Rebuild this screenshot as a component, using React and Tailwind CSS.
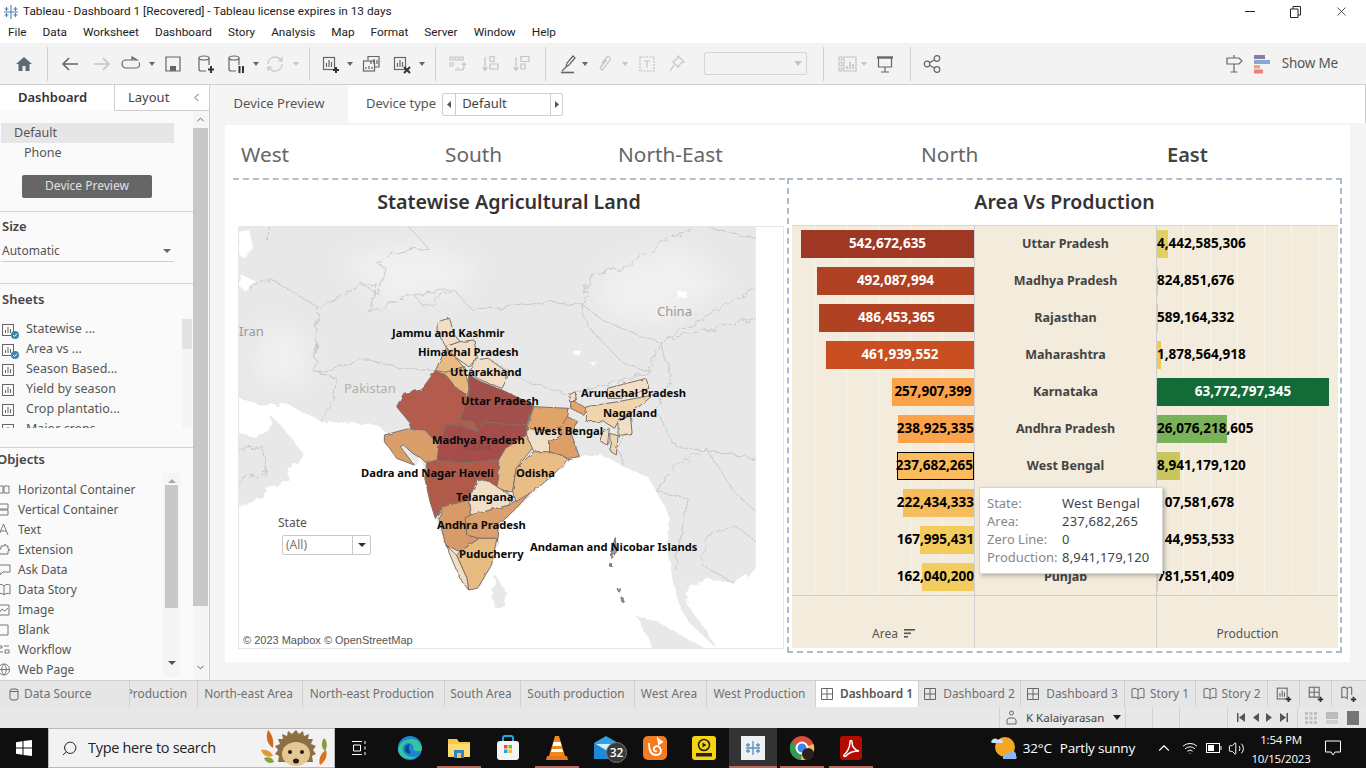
import React from "react";
import { ChevronLeft, ChevronUp, ChevronDown, X, Search, Wifi, Volume2 } from "lucide-react";

const menus = ["File", "Data", "Worksheet", "Dashboard", "Story", "Analysis", "Map", "Format", "Server", "Window", "Help"];

const sheets = ["Statewise ...", "Area vs ...", "Season Based...", "Yield by season", "Crop plantatio...", "Major crops"];
const objects = ["Horizontal Container", "Vertical Container", "Text", "Extension", "Ask Data", "Data Story", "Image", "Blank", "Workflow", "Web Page"];

const rows = [
  { area: "542,672,635", aw: 173, ac: "bg-[#9f3725] text-white justify-center", state: "Uttar Pradesh", prod: "4,442,585,306", pw: 11, pc: "bg-[#e2cf62]" },
  { area: "492,087,994", aw: 157, ac: "bg-[#b04122] text-white justify-center", state: "Madhya Pradesh", prod: "824,851,676", pw: 1, pc: "bg-[#f0cd5e]" },
  { area: "486,453,365", aw: 155, ac: "bg-[#b04122] text-white justify-center", state: "Rajasthan", prod: "589,164,332", pw: 1, pc: "bg-[#f0cd5e]" },
  { area: "461,939,552", aw: 148, ac: "bg-[#c94f22] text-white justify-center", state: "Maharashtra", prod: "1,878,564,918", pw: 4, pc: "bg-[#f0c95b]" },
  { area: "257,907,399", aw: 82, ac: "bg-[#fba34a] text-black justify-center", state: "Karnataka", prod: "63,772,797,345", pw: 172, pc: "bg-[#136b37]", big: true },
  { area: "238,925,335", aw: 76, ac: "bg-[#fba34a] text-black justify-end", state: "Andhra Pradesh", prod: "26,076,218,605", pw: 70, pc: "bg-[#7ab25a]" },
  { area: "237,682,265", aw: 77, ac: "bg-[#f9bb5c] text-black justify-end border border-black", state: "West Bengal", prod: "8,941,179,120", pw: 23, pc: "bg-[#c9c65c]" },
  { area: "222,434,333", aw: 71, ac: "bg-[#f7bc5c] text-black justify-end", state: "", prod: "107,581,678", pw: 1, pc: "bg-[#f0cd5e]" },
  { area: "167,995,431", aw: 54, ac: "bg-[#f2cd5e] text-black justify-end", state: "", prod: "144,953,533", pw: 1, pc: "bg-[#f0cd5e]" },
  { area: "162,040,200", aw: 52, ac: "bg-[#f2cd5e] text-black justify-end", state: "Punjab", prod: "781,551,409", pw: 1, pc: "bg-[#f0cd5e]" },
];

const tabs = [
  { label: "North-east Area", w: "w-[105px]" },
  { label: "North-east Production", w: "w-[142px]" },
  { label: "South Area", w: "w-[76px]" },
  { label: "South production", w: "w-[114px]" },
  { label: "West Area", w: "w-[72px]" },
  { label: "West Production", w: "w-[109px]" },
];

const mapLabels = [
  { t: "Jammu and Kashmir", c: "left-[153px] top-[99px]" },
  { t: "Himachal Pradesh", c: "left-[179px] top-[118px]" },
  { t: "Uttarakhand", c: "left-[211px] top-[138px]" },
  { t: "Uttar Pradesh", c: "left-[222px] top-[167px]" },
  { t: "Arunachal Pradesh", c: "left-[342px] top-[159px]" },
  { t: "Nagaland", c: "left-[364px] top-[179px]" },
  { t: "West Bengal", c: "left-[295px] top-[197px]" },
  { t: "Madhya Pradesh", c: "left-[193px] top-[206px]" },
  { t: "Dadra and Nagar Haveli", c: "left-[122px] top-[239px]" },
  { t: "Odisha", c: "left-[277px] top-[239px]" },
  { t: "Telangana", c: "left-[217px] top-[263px]" },
  { t: "Andhra Pradesh", c: "left-[198px] top-[291px]" },
  { t: "Puducherry", c: "left-[220px] top-[320px]" },
  { t: "Andaman and Nicobar Islands", c: "left-[291px] top-[313px]" },
];

function Ic({ className = "", children, size = 20 }) {
  return (
    <svg
      width={size}
      height={size}
      viewBox="0 0 20 20"
      fill="none"
      stroke="currentColor"
      strokeWidth="1.2"
      className={`flex-none ${className}`}
    >
      {children}
    </svg>
  );
}

function Drop({ className = "" }) {
  return <span className={`flex-none w-0 h-0 border-x-[3px] border-x-transparent border-t-[4px] border-t-current ${className}`} />;
}

function Sep({ className = "" }) {
  return <span className={`flex-none w-px h-[34px] bg-[#d2d2d2] ${className}`} />;
}

function BarIcon() {
  return (
    <>
      <rect x="2.5" y="3.5" width="11" height="12" />
      <path d="M5.5 13V9M8 13V6M10.5 13V8" />
    </>
  );
}

function Plus() {
  return <path d="M15 13v6M12 16h6" strokeWidth="2" stroke="#333" />;
}

function Toolbar() {
  return (
    <div className="h-[42px] flex items-center bg-[#f3f3f3] border-b border-[#cfcfcf] text-[#666] flex-none">
      <Ic className="ml-[14px] text-[#5f6a78]">
        <path d="M10 3 2 10h2.500v7h4v-5h3v5h4v-7H18z" fill="currentColor" stroke="none" />
      </Ic>
      <Sep className="ml-[13px]" />
      <Ic className="ml-[12px]"><path d="M18 10H3M9 4l-6 6 6 6" strokeWidth="1.6" /></Ic>
      <Ic className="ml-[12px] text-[#c4c4c4]"><path d="M2 10h15M11 4l6 6-6 6" strokeWidth="1.6" /></Ic>
      <Ic className="ml-[9px]"><path d="M11 6H5a3.500 3.500 0 0 0 0 8h10a3.500 3.500 0 0 0 3-5.500M11 3l5 3-5 0z" /></Ic>
      <Drop className="ml-[8px]" />
      <Ic className="ml-[8px]">
        <path d="M3 3h14v14H3z" />
        <rect x="7" y="12" width="6" height="5" fill="currentColor" stroke="none" />
      </Ic>
      <Ic className="ml-[12px]">
        <ellipse cx="9" cy="4" rx="5" ry="2" />
        <path d="M4 4v11a2 2 0 0 0 2 2h5M14 4v7" />
        <path d="M16 12v7M13 15.500h6" strokeWidth="2" stroke="#333" />
      </Ic>
      <Ic className="ml-[11px]">
        <ellipse cx="8" cy="4" rx="5" ry="2" />
        <path d="M3 4v11a2 2 0 0 0 2 2h5M13 4v7" />
        <path d="M13.500 12v7M17 12v7" strokeWidth="2" stroke="#333" />
      </Ic>
      <Drop className="ml-[7px]" />
      <Ic className="ml-[6px] text-[#c4c4c4]">
        <path d="M3 10a7 7 0 0 1 12-5l2 2M17 10a7 7 0 0 1-12 5l-2-2M17 3v4h-4M3 17v-4h4" />
      </Ic>
      <Drop className="ml-[8px] text-[#c4c4c4]" />
      <Sep className="ml-[10px]" />
      <Ic className="ml-[11px]"><BarIcon /><Plus /></Ic>
      <Drop className="ml-[6px]" />
      <Ic className="ml-[8px]">
        <path d="M7 6V2.500h11V13h-4" />
        <path d="M10 10V7M13 10V5M16 10V6" />
        <rect x="2.500" y="7" width="11" height="10" />
        <path d="M5 15v-2M8 15v-3M11 15v-2" />
      </Ic>
      <Ic className="ml-[11px]">
        <BarIcon />
        <path d="M12 13l6 6M18 13l-6 6" strokeWidth="2" stroke="#333" />
      </Ic>
      <Drop className="ml-[7px]" />
      <Sep className="ml-[10px]" />
      <Ic className="ml-[11px] text-[#c4c4c4]">
        <path d="M3 3h3v3H3zM8 3h3v3H8zM13 3h3v3h-3zM3 9h3v3H3zM8 16h3v-3" />
        <path d="M17 9v4a3 3 0 0 1-3 3h-2M15 11l2-2 2 2" />
      </Ic>
      <Ic className="ml-[13px] text-[#c4c4c4]">
        <path d="M5 3v13M2.500 13 5 16.500 7.500 13M10 2.500h4v5h-4zM10 10h8v5h-8z" />
      </Ic>
      <Ic className="ml-[11px] text-[#c4c4c4]">
        <path d="M5 3v13M2.500 13 5 16.500 7.500 13M10 2.500h8v5h-8zM10 10h4v5h-4z" />
      </Ic>
      <Sep className="ml-[14px]" />
      <Ic className="ml-[12px]">
        <path d="m8 13 1-4 6-7 2 2-6 7zM4 17c2-2 3-3 4-4" />
        <path d="M3 18.500h13" strokeWidth="1.6" />
      </Ic>
      <Drop className="ml-[4px]" />
      <Ic className="ml-[7px] text-[#c4c4c4]">
        <path d="M7 9l5-6a2.200 2.200 0 0 1 3 3l-7 9a1.500 1.500 0 0 1-2.400-2l6-7" />
      </Ic>
      <Drop className="ml-[7px] text-[#c4c4c4]" />
      <Ic className="ml-[9px] text-[#c4c4c4]">
        <rect x="3" y="3" width="14" height="14" strokeDasharray="2 1" />
        <path d="M7 7h6M10 7v6.500" />
      </Ic>
      <Ic className="ml-[10px] text-[#c4c4c4]">
        <path d="m11 2 6 6-3 1-3 4-5-5 4-3zM7 11l-4 6" />
      </Ic>
      <div className="ml-[17px] w-[103px] h-[23px] flex-none flex items-center justify-end pr-[4px] border border-[#d5d5d5] rounded-[2px] text-[#c4c4c4]">
        <Drop className="border-x-[4px] border-t-[5px]" />
      </div>
      <Sep className="ml-[16px]" />
      <Ic className="ml-[14px] text-[#c4c4c4]">
        <path d="M1 3h3v3H1zM1 8.500h3v3H1zM1 14h3v3H1zM6 3h12v14H6z" />
        <path d="M9 15v-3M12 15V8M15 15v-5" strokeWidth="1.6" />
      </Ic>
      <Drop className="ml-[3px] text-[#c4c4c4]" />
      <Ic className="ml-[8px]">
        <path d="M2 3.500h16" strokeWidth="2.4" />
        <path d="M3.500 4v9h13V4M10 13v5M6 18h8" />
      </Ic>
      <Sep className="ml-[15px]" />
      <Ic className="ml-[11px]">
        <circle cx="15" cy="4.500" r="2.800" />
        <circle cx="5" cy="10" r="2.800" />
        <circle cx="15" cy="15.500" r="2.800" />
        <path d="m7.500 8.700 5-2.900M7.500 11.300l5 2.900" />
      </Ic>
      <Ic className="ml-auto">
        <path d="M10 1v3M3 4h12l3 3-3 3H3zM10 10v8M6.500 18h7" />
      </Ic>
      <svg width="16" height="20" viewBox="0 0 16 20" className="ml-[10px] flex-none">
        <rect x="0" y="1" width="11" height="4" fill="#8f7ba8" />
        <rect x="0" y="6" width="16" height="4" fill="#86a9d0" />
        <rect x="0" y="11" width="6" height="3.500" fill="#f2a86f" />
        <rect x="0" y="15.500" width="9" height="4" fill="#ee7f86" />
      </svg>
      <span className="ml-[12px] mr-[28px] text-[13.5px] tracking-[-0.2px] text-[#555]">Show Me</span>
    </div>
  );
}

function Sidebar() {
  return (
    <aside className="w-[210px] flex-none flex flex-col bg-[#fafafa] border-r border-[#cfcfcf] text-[#555] overflow-hidden">
      <div className="h-[26px] flex flex-none bg-white">
        <div className="w-[114px] flex items-center pl-[18px] text-[13px] font-semibold text-[#333]">Dashboard</div>
        <div className="flex-1 flex items-center pl-[13px] pr-[6px] justify-between border-l border-b border-[#cfcfcf] text-[13px] text-[#444]">
          Layout
          <ChevronLeft size={13} strokeWidth={1.5} />
        </div>
      </div>
      <div className="flex-1 flex min-h-0">
        <div className="w-[193px] flex-none flex flex-col">
          <div className="mt-[12px] ml-[1px] mr-[19px] h-[20px] pt-px flex items-center pl-[13px] bg-[#e6e6e6] text-[12.5px]">Default</div>
          <div className="h-[20px] pt-px flex items-center pl-[24px] text-[12.5px]">Phone</div>
          <div className="mt-[12px] ml-[22px] w-[130px] h-[23px] pb-px flex items-center justify-center bg-[#666] rounded-[2px] text-[#e0e0e0] text-[12px]">Device Preview</div>
          <div className="mt-[13px] h-px flex-none bg-[#d2d2d2]" />
          <div className="mt-[6px] h-[18px] pl-[2px] flex items-center text-[13px] font-semibold text-[#444]">Size</div>
          <div className="mt-[5px] ml-[1px] mr-[19px] h-[21px] flex items-center justify-between pl-px pr-[3px] border-b border-[#cfcfcf] text-[12px]">
            Automatic
            <Drop className="border-x-[4px] border-t-[4px] text-[#666]" />
          </div>
          <div className="mt-[21px] h-px flex-none bg-[#d2d2d2]" />
          <div className="mt-[7px] mb-[-1px] h-[18px] pl-[2px] flex items-center text-[13px] font-semibold text-[#444]">Sheets</div>
          <div className="mt-[11px] h-[109px] flex flex-none overflow-hidden">
            <div className="flex-1 pl-[2px]">
              {sheets.map((s, i) => (
                <div key={s} className="h-[20px] pt-px flex items-center text-[12.5px]">
                  <span className="relative w-[14px] h-[14px] flex-none mr-[10px]">
                    <svg width="13" height="13" viewBox="0 0 13 13" fill="none" stroke="#666">
                      <rect x="0.5" y="1.5" width="11" height="11" />
                      <path d="M3.500 10V7M6 10V4M8.500 10V6" />
                    </svg>
                    {i < 2 && (
                      <svg width="8" height="8" viewBox="0 0 8 8" className="absolute right-[-3px] bottom-[-2px]">
                        <circle cx="4" cy="4" r="4" fill="#3b87ad" />
                        <path d="M2 4l1.500 1.500L6 2.800" fill="none" stroke="#fff" />
                      </svg>
                    )}
                  </span>
                  {s}
                </div>
              ))}
            </div>
            <div className="w-[10px] mr-px bg-[#f5f5f5]">
              <div className="h-[30px] bg-[#e2e2e2]" />
            </div>
          </div>
          <div className="mt-[19px] h-px flex-none bg-[#d2d2d2]" />
          <div className="mt-[3px] mb-[-1px] h-[18px] ml-[-3px] flex items-center text-[13px] font-semibold text-[#444]">Objects</div>
          <div className="mt-[5px] flex-1 flex min-h-0">
            <div className="w-[163px] flex-none pt-[6px]">
              {objects.map((o, i) => (
                <div key={o} className="h-[20px] pt-px flex items-center text-[12px]">
                  <svg width="13" height="13" viewBox="0 0 13 13" fill="none" stroke="#777" className="ml-[-2px] mr-[7px] flex-none">
                    {i === 0 && <path d="M0 3h5v7H0zM6 3h5v7H6z" />}
                    {i === 1 && <path d="M0 1h10v5H0zM0 7h10v5H0z" />}
                    {i === 2 && <path d="M1 12 5.500 1 10 12M3 8h5" />}
                    {i === 3 && <path d="M0 6h3V3h3l1-2 1 2h2v3l2 1-2 1v3H2z" />}
                    {i === 4 && <path d="M2 2h10v7H5l-3 3v-3H0" />}
                    {i === 5 && <path d="M0 2c2-1 4-1 6 1 2-2 4-2 6-1v9c-2-1-4-1-6 1-2-2-4-2-6-1zM6 3v9" />}
                    {i === 6 && <path d="M0 2h11v10H0zM1 10l3-4 3 2 3-3" />}
                    {i === 7 && <path d="M0 2h10v10H0z" />}
                    {i === 8 && <path d="M0 3h4v2H0zM6 3h5M0 9h5M7 7h4v3H7z" />}
                    {i === 9 && <path d="M6 1a5.500 5.500 0 1 0 .01 0zM.5 6.500h11M6 1c-3 3-3 8 0 11M6 1c3 3 3 8 0 11" />}
                  </svg>
                  {o}
                </div>
              ))}
            </div>
            <div className="w-[17px] flex-none h-[204px] bg-[#f5f5f5] flex flex-col items-center pt-[6px]">
              <Drop className="rotate-180 border-x-[4px] border-t-[4px] text-[#aaa]" />
              <div className="mt-[2px] w-[13px] h-[123px] bg-[#c8c8c8]" />
              <Drop className="mt-[53px] border-x-[4px] border-t-[4px] text-[#555]" />
            </div>
          </div>
        </div>
        <div className="w-[15px] flex-none flex flex-col items-center bg-[#f5f5f5]">
          <ChevronUp size={11} strokeWidth={2} className="mt-[3px] flex-none text-[#555]" />
          <div className="mt-[3px] w-full h-[478px] flex-none bg-[#c8c8c8]" />
          <ChevronDown size={11} strokeWidth={2} className="mt-[56px] flex-none text-[#555]" />
        </div>
      </div>
    </aside>
  );
}

// state shapes, in the coordinates of a 1565x1275 map tile
const states = [
  ["#f0dfc6", "M575 290 610 280 625 330 640 350 600 365 575 320Z"],
  ["#f0dfc6", "M640 350 680 345 690 400 665 425 625 395 600 365Z"],
  ["#e8b981", "M600 370 625 395 650 425 620 445 590 440 570 437Z"],
  ["#e7b67d", "M590 445 650 425 668 490 660 510 630 490Z"],
  ["#f0dfc6", "M680 405 720 400 780 445 760 490 700 465 668 445Z"],
  ["#b35b4d", "M570 437 600 450 630 490 660 510 650 555 640 585 680 590 690 620 640 600 600 600 580 660 545 620 500 610 495 590 460 545 480 505 530 495Z"],
  ["#a34f4b", "M665 450 700 470 760 495 850 540 830 600 780 600 710 590 690 620 680 590 640 585 650 555 665 510Z"],
  ["#a54e4c", "M600 600 640 600 690 620 710 590 780 600 830 600 830 630 770 670 750 705 640 715 575 705 580 660Z"],
  ["#d99e6a", "M425 630 490 612 540 615 580 660 575 705 545 715 530 700 500 680 480 660 470 665 510 720 460 700 440 670 425 650Z"],
  ["#b05a4a", "M545 715 575 705 640 715 750 705 750 760 745 785 690 770 665 825 590 845 570 880 555 830 540 760Z"],
  ["#d89a66", "M590 845 665 825 670 870 655 880 660 930 695 940 640 980 600 960 580 880Z"],
  ["#dba06d", "M670 870 780 840 860 780 800 850 750 900 745 940 695 940 660 930 655 880Z"],
  ["#efdfc6", "M690 762 725 770 745 785 790 815 780 840 670 870 665 825Z"],
  ["#e8bb82", "M695 940 745 940 730 1020 690 1090 665 1095 660 1060 630 990 640 980Z"],
  ["#f0dfc4", "M600 960 630 990 660 1060 665 1095 640 1060Z"],
  ["#e7bb84", "M770 670 830 630 850 665 800 730 790 800 770 800 745 785 750 760 750 705Z"],
  ["#e9bd85", "M850 680 895 680 950 700 905 750 860 790 800 830 790 800 800 730Z"],
  ["#f0dfc6", "M830 610 880 615 925 610 930 630 895 655 900 680 850 680 830 630Z"],
  ["#e0a468", "M850 545 950 550 945 590 925 610 880 615 830 610Z"],
  ["#dd9e69", "M945 575 975 590 955 620 980 695 950 700 895 680 895 650 930 630 925 610Z"],
  ["#e3a76c", "M955 530 975 535 1000 550 990 568 955 550Z"],
  ["#f0dfc6", "M950 510 968 500 972 530 952 530Z"],
  ["#f0dfc6", "M1060 490 1170 460 1178 490 1100 520 1060 520Z"],
  ["#f0d5ac", "M1000 545 1090 530 1190 510 1120 570 1090 590 1080 610 1050 590 1000 590Z"],
  ["#f0dfc6", "M1090 590 1125 570 1130 625 1090 632Z"],
  ["#f0dfc6", "M1040 625 1065 610 1060 660 1040 650Z"],
  ["#eed6b3", "M1066 625 1090 632 1085 690 1070 680Z"],
];

const borders = [
  "M95 0V50M40 190 100 160 240 250 360 180 380 190 410 210 430 130 400 110 470 80 550 70 490 0",
  "M235 250 225 440 290 460 280 520 245 590M360 180 405 180 380 260 510 210 620 190",
  "M510 210 540 250 620 190 670 250 740 250 900 230 990 240 1000 300 1100 410 1180 440 1210 350 1240 460 1200 560 1250 660 1360 680 1482 700",
  "M1010 150 1100 130 1240 40 1320 0M1010 150 990 240 1050 290 1200 350 1482 280M1210 350 1480 190M1320 0 1482 40",
  "M720 400 830 470 950 510 1190 440M1210 770 1260 720 1340 670M1340 670 1420 800 1482 860M1210 770 1200 800 1290 820 1250 1030M1340 940 1420 900 1482 950M1340 940 1330 1020 1420 1075",
  "M8 670 80 665 90 740 8 770M570 437 470 430 380 400 310 420 230 445M1100 720 1090 650 1130 620",
];

function IndiaMap() {
  return (
    <svg
      width="550"
      height="425"
      viewBox="0 0 1565 1275"
      preserveAspectRatio="none"
      className="absolute left-[-4px] top-[-2px]"
    >
      <defs>
        <clipPath id="tile"><rect x="9" y="3" width="1473" height="1272" /></clipPath>
        <filter id="coast" x="-5%" y="-5%" width="110%" height="110%">
          <feTurbulence type="fractalNoise" baseFrequency="0.035" numOctaves="3" seed="4" />
          <feDisplacementMap in="SourceGraphic" scale="26" />
        </filter>
        <filter id="edge" x="-5%" y="-5%" width="110%" height="110%">
          <feTurbulence type="fractalNoise" baseFrequency="0.05" numOctaves="2" seed="9" />
          <feDisplacementMap in="SourceGraphic" scale="9" />
        </filter>
        <filter id="soft"><feGaussianBlur stdDeviation="30" /></filter>
      </defs>
      <g clipPath="url(#tile)">
        <g fill="#e8e8e8" filter="url(#coast)">
          <path d="M-20-20H1500V1020L1420 1075 1340 1060 1300 1080 1240 1030 1230 960 1240 880 1200 800 1180 760 1100 720 1060 700 1040 690 980 700 950 700 860 790 800 850 750 900 745 940 730 1020 690 1090 665 1095 640 1060 600 960 570 880 540 760 530 700 510 720 460 700 440 670 425 640 430 620 400 600 380 595 250 590 130 530 100 545 8 520H-20Z" />
          <path d="M-20 610 60 640 100 600 100 570 130 600 190 680 150 760 60 820 8 850H-20Z" />
          <path d="M740 1050 770 1100 770 1140 745 1155 730 1110Z" />
          <path d="M1140 1170 1220 1200 1370 1290H1200Z" />
          <path d="M1240 1030 1300 1080 1280 1130 1330 1200 1370 1270 1290 1190 1250 1100Z" />
        </g>
        <g fill="#f0f0f0" filter="url(#soft)">
          <path d="M300 100 520 50 700 120 640 210 420 240Z" />
          <path d="M1050 130 1280 60 1400 180 1200 300 1040 260Z" />
          <path d="M80 280 210 340 200 480 60 470Z" />
        </g>
        <g fill="#ffffff" filter="url(#edge)">
          <path d="M10 20 40 15 50 60 30 100 10 90Z" />
          <path d="M1258 198 1285 200 1285 218 1262 220Z" />
          <path d="M965 375 985 378 980 392 962 388Z" />
          <path d="M1010 412 1030 412 1020 422Z" />
          <path d="M20 150 60 170 30 200 10 180Z" />
        </g>
        <g fill="none" stroke="#c8c8c8" filter="url(#coast)">
          {borders.map((d) => (
            <path key={d} d={d} strokeWidth="1" vectorEffect="non-scaling-stroke" />
          ))}
        </g>
        <g stroke="#7d7068" strokeWidth="1" strokeLinejoin="round" filter="url(#edge)">
          {states.map(([fill, d]) => (
            <path key={d} d={d} fill={fill} vectorEffect="non-scaling-stroke" />
          ))}
          <path d="M1082 938 1086 980 1072 1000 1072 970Z" fill="#9a9a9a" vectorEffect="non-scaling-stroke" />
          <path d="M1066 1016h8v8h-8zM1100 1115l8 16-6 1-4-12zM1088 1090h8v8h-8z" fill="#9a9a9a" vectorEffect="non-scaling-stroke" />
        </g>
      </g>
    </svg>
  );
}

function MapPanel() {
  return (
    <div className="relative ml-[5px] w-[546px] h-[423px] overflow-hidden border border-[#e6e6e6] bg-white">
      <IndiaMap />
      <span className="absolute left-0 top-[95px] text-[13px] text-[#999]">Iran</span>
      <span className="absolute left-[418px] top-[75px] text-[13px] text-[#999]">China</span>
      <span className="absolute left-[105px] top-[152px] text-[13px] text-[#b0b0b0]">Pakistan</span>
      <span className="absolute left-[223px] top-[210px] text-[12px] text-[#8e4442]">India</span>
      {mapLabels.map((l) => (
        <span key={l.t} className={`absolute whitespace-nowrap text-[11.2px] leading-[14px] font-bold text-[#0a0a0a] ${l.c}`}>
          {l.t}
        </span>
      ))}
      <span className="absolute left-[39px] top-[287px] text-[12px] text-[#555]">State</span>
      <div className="absolute left-[43px] top-[308px] w-[89px] h-[20px] flex items-center bg-white border border-[#c8c8c8] rounded-[2px] text-[12px] text-[#777]">
        <span className="flex-1 pl-[3px]">(All)</span>
        <span className="w-[18px] h-full flex items-center justify-center border-l border-[#c8c8c8] text-[#333]">
          <Drop className="border-x-[4px] border-t-[4px]" />
        </span>
      </div>
      <span className="absolute left-[1px] top-[405px] px-[3px] h-[17px] flex items-center bg-white/70 text-[11px] text-[#555] font-['Liberation_Sans',sans-serif]">
        © 2023 Mapbox © OpenStreetMap
      </span>
    </div>
  );
}

function ChartPanel() {
  return (
    <div className="ml-[3px] w-[546px] h-[423px] flex flex-col bg-[#f3ebdb] shadow-[inset_0_1px_0_#d6d6d6] font-bold">
      {rows.map((r) => (
        <div key={r.area} className="h-[37px] flex-none flex">
          <div className="w-[183px] flex-none flex items-center justify-end border-r border-[#cfcfcf] text-[13.5px] bg-[repeating-linear-gradient(to_left,transparent_0,transparent_31px,#f9f5ec_31px,#f9f5ec_32px)]">
            <div className={`h-[28px] flex items-center whitespace-nowrap ${r.ac}`} style={{ width: r.aw }}>
              <span className="flex-none">{r.area}</span>
            </div>
          </div>
          <div className="w-[182px] flex-none pt-px flex items-center justify-center border-r border-[#cfcfcf] text-[12.5px] text-[#444]">{r.state}</div>
          <div className="flex-1 relative flex items-center text-[13.5px] bg-[repeating-linear-gradient(to_right,transparent_0,transparent_26px,#f9f5ec_26px,#f9f5ec_27px)]">
            <div className={`h-[28px] flex-none ${r.pc}`} style={{ width: r.pw }} />
            {r.big ? (
              <span className="absolute left-0 w-[172px] text-center text-white">{r.prod}</span>
            ) : (
              <span className="absolute left-0 text-black">{r.prod}</span>
            )}
          </div>
        </div>
      ))}
      <div className="flex-1 flex border-t border-[#cfcfcf] text-[12px] font-normal text-[#555]">
        <div className="w-[183px] flex-none flex items-end justify-center gap-[6px] pb-[5px] pl-[22px] border-r border-[#cfcfcf]">
          Area
          <svg width="12" height="11" viewBox="0 0 12 11" className="mb-[3px]" fill="#555">
            <rect x="0" y="0" width="11" height="1.600" />
            <rect x="0" y="3.500" width="7" height="1.600" />
            <rect x="0" y="7" width="4" height="1.600" />
          </svg>
        </div>
        <div className="w-[182px] flex-none border-r border-[#cfcfcf]" />
        <div className="flex-1 flex items-end justify-center pb-[5px]">Production</div>
      </div>
    </div>
  );
}

function Dashboard() {
  return (
    <div className="ml-[15px] mt-[2px] w-[1125px] h-[537px] bg-white">
      <div className="h-[53px] pt-[16px] flex text-[20.8px] leading-[27px] text-[#666]">
        <span className="ml-[16px] w-[204px]">West</span>
        <span className="w-[173px]">South</span>
        <span className="w-[303px]">North-East</span>
        <span className="w-[246px]">North</span>
        <span className="text-[20px] font-semibold text-[#444]">East</span>
      </div>
      <div className="flex">
        <div className="ml-[8px] w-[552px] flex-none">
          <div className="h-[48px] pb-[2px] border-t-2 border-dashed border-[#b5c0cc] flex items-center justify-center text-[19.7px] font-semibold text-[#333]">
            Statewise Agricultural Land
          </div>
          <MapPanel />
        </div>
        <div className="relative ml-[2px] w-[555px] h-[475px] flex-none border-2 border-dashed border-[#aebbcb]">
          <div className="h-[45px] pb-[2px] flex items-center justify-center text-[19.5px] font-semibold text-[#333]">Area Vs Production</div>
          <ChartPanel />
          <div className="absolute left-[190px] top-[307px] w-[184px] h-[87px] pt-[6px] pl-[7px] bg-white border border-[#d5d5d5] shadow-[2px_2px_4px_rgba(0,0,0,0.25)] text-[13px] leading-[18px]">
            {[
              ["State:", "West Bengal"],
              ["Area:", "237,682,265"],
              ["Zero Line:", "0"],
              ["Production:", "8,941,179,120"],
            ].map(([k, v]) => (
              <div key={k} className="flex whitespace-nowrap">
                <span className="w-[75px] flex-none text-[#888]">{k}</span>
                <span className="text-[#444] tracking-[0.2px]">{v}</span>
              </div>
            ))}
          </div>
        </div>
      </div>
    </div>
  );
}

function TabIcon({ type }) {
  if (type === "story") {
    return (
      <svg width="14" height="14" viewBox="0 0 14 14" fill="none" stroke="#666" className="mr-[5px] flex-none">
        <path d="M1 2c2-1 4-1 6 1 2-2 4-2 6-1v9c-2-1-4-1-6 1-2-2-4-2-6-1zM7 3v9" />
      </svg>
    );
  }
  return (
    <svg width="13" height="13" viewBox="0 0 13 13" fill="none" stroke="#666" className="mr-[6px] flex-none">
      <path d="M.5.5h11v11H.5zM6 .5v11M.5 6h11" />
    </svg>
  );
}

function TabBar() {
  return (
    <div className="h-[27px] flex flex-none bg-[#e6e6e6] border-t border-[#cfcfcf] text-[11.9px] text-[#707070] whitespace-nowrap">
      <div className="w-[130px] flex-none flex items-center pl-[9px] border-r border-[#cfcfcf]">
        <svg width="10" height="13" viewBox="0 0 10 13" fill="none" stroke="#666" className="mr-[5px]">
          <rect x="1" y="1" width="8" height="11" rx="2" />
          <path d="M1 3.500h8" />
        </svg>
        Data Source
      </div>
      <div className="w-[68px] flex-none flex items-center justify-end pr-[10px] border-r border-[#cfcfcf] overflow-hidden">Production</div>
      {tabs.map((t) => (
        <div key={t.label} className={`${t.w} flex-none pr-[3px] flex items-center justify-center border-r border-[#cfcfcf]`}>{t.label}</div>
      ))}
      <div className="w-[102px] flex-none flex items-center justify-center bg-white font-semibold text-[#555]"><TabIcon />Dashboard 1</div>
      <div className="w-[103px] flex-none flex items-center justify-center border-x border-[#cfcfcf]"><TabIcon />Dashboard 2</div>
      <div className="w-[104px] flex-none flex items-center justify-center border-r border-[#cfcfcf]"><TabIcon />Dashboard 3</div>
      <div className="w-[71px] flex-none flex items-center justify-center border-r border-[#cfcfcf]"><TabIcon type="story" />Story 1</div>
      <div className="w-[72px] flex-none flex items-center justify-center border-r border-[#cfcfcf]"><TabIcon type="story" />Story 2</div>
      <div className="w-[32px] flex-none flex items-center justify-center border-r border-[#cfcfcf]">
        <Ic size={18} className="text-[#666]"><BarIcon /><Plus /></Ic>
      </div>
      <div className="w-[32px] flex-none flex items-center justify-center border-r border-[#cfcfcf]">
        <Ic size={18} className="text-[#666]">
          <path d="M2.500 2.500h11v11h-11zM8 2.500v11M2.500 8h11" />
          <Plus />
        </Ic>
      </div>
      <div className="flex-1 flex items-center justify-center">
        <Ic size={18} className="text-[#666]">
          <path d="M2 3c2-1 4-1 6 1 2-2 4-2 5-1v8M2 3v11c2-1 4-1 6 1V4" />
          <Plus />
        </Ic>
      </div>
    </div>
  );
}

function StatusBar() {
  return (
    <div className="h-[21px] flex flex-none bg-[#e8e8e8] text-[#444] text-[12px]">
      <div className="ml-[999px] w-[127px] flex items-center pl-[6px] border-x border-[#d2d2d2]">
        <svg width="11" height="15" viewBox="0 0 11 15" fill="none" stroke="#666" className="flex-none">
          <circle cx="5.500" cy="3" r="2" />
          <path d="M1 14V10a3 3 0 0 1 3-2h3a3 3 0 0 1 3 2v4z" />
        </svg>
        <span className="ml-[9px] text-[11.5px] whitespace-nowrap">K Kalaiyarasan</span>
        <Drop className="ml-[9px] border-x-[4px] border-t-[5px] text-[#222]" />
      </div>
      <div className="w-[27px] border-r border-[#d2d2d2]" />
      <div className="w-[27px] border-r border-[#d2d2d2]" />
      <div className="w-[48px] border-r border-[#d2d2d2]" />
      <div className="w-[70px] flex items-center justify-around px-[5px] border-r border-[#d2d2d2] text-[#555]">
        <svg width="8" height="9" viewBox="0 0 8 9" fill="currentColor"><path d="M0 0h1.500v9H0zM8 0v9L2 4.500z" /></svg>
        <svg width="6" height="9" viewBox="0 0 6 9" fill="currentColor"><path d="M6 0v9L0 4.500z" /></svg>
        <svg width="6" height="9" viewBox="0 0 6 9" fill="currentColor"><path d="M0 0v9l6-4.500z" /></svg>
        <svg width="8" height="9" viewBox="0 0 8 9" fill="currentColor"><path d="M0 0v9l6-4.500zM6.500 0H8v9H6.500z" /></svg>
      </div>
      <div className="flex-1 flex items-center gap-[9px] pl-[7px]">
        <svg width="12" height="14" viewBox="0 0 12 14" fill="#c0c0c0"><path d="M0 1h3v3H0zM4.500 1h3v3h-3zM9 1h3v3H9zM0 5.500h3v3H0zM4.500 5.500h3v3h-3zM9 5.500h3v3H9zM0 10h3v3H0zM4.500 10h3v3h-3zM9 10h3v3H9z" /></svg>
        <svg width="12" height="14" viewBox="0 0 12 14"><rect y="1" width="12" height="7" fill="#bcbcbc" /><rect y="9" width="12" height="4" fill="#d0d0d0" /></svg>
        <svg width="12" height="14" viewBox="0 0 12 14"><rect y="0" width="12" height="14" fill="#757575" /></svg>
      </div>
    </div>
  );
}

function Hedgehog() {
  return (
    <svg width="76" height="40" viewBox="0 0 76 40" className="flex-none">
      <path d="M10 2c4 4 6 10 5 18-5-3-8-10-5-18z" fill="#d2691e" />
      <path d="M3 22c5-1 10 1 12 6-5 2-10 0-12-6z" fill="#e39a2d" />
      <path d="M6 30c5-2 9 0 10 4-4 2-8 1-10-4z" fill="#8aa23a" />
      <path d="M66 10c3 3 4 8 1 13-4-3-4-9-1-13z" fill="#8d9a3c" />
      <path d="M68 22c2 6-1 12-6 15-2-6 1-12 6-15z" fill="#d9741f" />
      <path d="M38 2l3 4 4-3 1 5 5-2-1 5 5 0-2 5 5 2-3 4 3 4-4 2 1 6H20l1-6-4-2 3-4-3-4 5-2-2-5 5 0-1-5 5 2 1-5 4 3z" fill="#8e6f44" />
      <ellipse cx="38" cy="26" rx="14" ry="12" fill="#e3c795" />
      <circle cx="32" cy="24" r="2" fill="#2b1c10" />
      <circle cx="44" cy="24" r="2" fill="#2b1c10" />
      <ellipse cx="38" cy="33" rx="3" ry="2.500" fill="#2b1c10" />
    </svg>
  );
}

function Underline({ on }) {
  return on ? <span className="absolute bottom-0 left-[-2px] right-[-2px] h-[2px] bg-[#b5695f]" /> : null;
}

function TaskIcon({ className = "", on, children }) {
  return (
    <div className={`relative w-[40px] h-full flex-none flex items-center justify-center ${className}`}>
      {children}
      <Underline on={on} />
    </div>
  );
}

function Taskbar() {
  return (
    <div className="h-[40px] flex flex-none items-stretch bg-[#0f0f0f] text-white font-['Open_Sans',sans-serif]">
      <div className="w-[48px] flex items-center justify-center">
        <svg width="16" height="16" viewBox="0 0 16 16" fill="#fff">
          <path d="M0 2.200 6.500 1.300V7.500H0zM7.500 1.100 16 0V7.500H7.500zM0 8.500h6.500V14.700L0 13.800zM7.500 8.500H16V16L7.500 14.900z" />
        </svg>
      </div>
      <div className="w-[287px] flex items-center bg-[#f2f2f2] border border-[#b9b9b9] text-[#222]">
        <Search size={17} strokeWidth={1.4} className="ml-[12px] -scale-x-100 flex-none" />
        <span className="ml-[10px] flex-1 text-[14.5px] tracking-[-0.3px]">Type here to search</span>
        <Hedgehog />
      </div>
      <div className="ml-[17px] w-[16px] flex items-center">
        <svg width="16" height="16" viewBox="0 0 16 16" fill="none" stroke="#fff">
          <path d="M0 1.500h10M0 14.500h10M1.500 5h7v6h-7zM13 1v3M13 6.500v3M13 12v3" />
        </svg>
      </div>
      <div className="ml-[22px] flex">
        <TaskIcon>
          <svg width="26" height="26" viewBox="0 0 26 26">
            <circle cx="13" cy="13" r="12" fill="#1b87d4" />
            <path d="M1 15C2 6 12 2 19 5c4 2 6 6 6 10-2 2-7 2-9-1 2-4-3-8-8-5-3 2-3 7 0 10 3 3 8 4 12 2-4 5-18 4-19-6z" fill="#36c4a0" />
            <path d="M13 9c-5 0-7 6-3 9 2 1 3 1 4-1-2-1-3-5-1-8z" fill="#0f4a87" />
          </svg>
        </TaskIcon>
        <TaskIcon className="ml-[9px]" on>
          <svg width="24" height="24" viewBox="0 0 24 24">
            <path d="M1 3h9l2 3h11v15H1z" fill="#f5c84c" />
            <path d="M1 8h22v13H1z" fill="#fbdc6c" />
            <rect x="7" y="14" width="10" height="8" fill="#2a86c9" />
            <rect x="10" y="17" width="4" height="5" fill="#f5c84c" />
          </svg>
        </TaskIcon>
        <TaskIcon className="ml-[9px]">
          <svg width="24" height="26" viewBox="0 0 24 26">
            <path d="M7 6V3a2 2 0 0 1 2-2h6a2 2 0 0 1 2 2v3" fill="none" stroke="#29a6e0" strokeWidth="2" />
            <rect x="1" y="6" width="22" height="19" rx="3" fill="#f4f4f4" />
            <rect x="8" y="10" width="3.500" height="3.500" fill="#e8542f" />
            <rect x="12.500" y="10" width="3.500" height="3.500" fill="#7fba28" />
            <rect x="8" y="14.500" width="3.500" height="3.500" fill="#1fa5e6" />
            <rect x="12.500" y="14.500" width="3.500" height="3.500" fill="#f8b819" />
          </svg>
        </TaskIcon>
        <TaskIcon className="ml-[9px]" on>
          <svg width="22" height="26" viewBox="0 0 22 26">
            <path d="M9 1h4l6 20H3z" fill="#f08a1c" />
            <path d="M7.500 7h7l1 4h-9zM6 14h10l1 3H5z" fill="#fff" />
            <path d="M1 21h20l1 4H0z" fill="#e8781a" />
          </svg>
        </TaskIcon>
        <TaskIcon className="ml-[9px]">
          <div className="relative w-[26px] h-[24px]">
            <svg width="26" height="24" viewBox="0 0 26 24">
              <rect x="1" y="7" width="24" height="16" fill="#1c8ad4" />
              <path d="M1 7 13 0 25 7 13 15z" fill="#2fa3e8" />
              <path d="M3 8h20L13 14z" fill="#d9effa" />
            </svg>
            <span className="absolute left-[13px] top-[6px] w-[21px] h-[21px] flex items-center justify-center rounded-full bg-[#3a3a3a] border border-[#777] text-[12px] font-semibold">32</span>
          </div>
        </TaskIcon>
        <TaskIcon className="ml-[9px]">
          <svg width="24" height="26" viewBox="0 0 24 26">
            <rect x="0" y="1" width="24" height="24" rx="5" fill="#f47b20" />
            <path d="M6 8c0 8 2 12 7 12s6-4 4-7-5-2-6 0 1 4 3 3M15 4l4 3-3 2z" fill="none" stroke="#fff" strokeWidth="1.8" />
          </svg>
        </TaskIcon>
        <TaskIcon className="ml-[9px]">
          <svg width="24" height="26" viewBox="0 0 24 26">
            <rect x="0" y="1" width="24" height="24" rx="3" fill="#f6d40e" />
            <circle cx="12" cy="10" r="5.500" fill="none" stroke="#222" strokeWidth="1.6" />
            <path d="M10.500 7.500v5l4-2.500z" fill="#222" />
            <rect x="4" y="18" width="16" height="3.500" fill="#222" />
          </svg>
        </TaskIcon>
        <div className="relative ml-[5px] w-[48px] h-full flex items-center justify-center bg-[#333]">
          <div className="w-[24px] h-[24px] flex items-center justify-center bg-[#eef1f4]">
            <svg width="20" height="20" viewBox="0 0 20 20" stroke="#5b8fc0" strokeWidth="1.3">
              <path d="M10 3v14M3 10h14M5 5v4M3 7h4M15 5v4M13 7h4M5 11v4M3 13h4M15 11v4M13 13h4" />
            </svg>
          </div>
          <span className="absolute bottom-0 inset-x-0 h-[2px] bg-[#b5695f]" />
        </div>
        <TaskIcon className="ml-[5px]" on>
          <svg width="26" height="26" viewBox="0 0 26 26">
            <circle cx="13" cy="13" r="12" fill="#dd4b3e" />
            <path d="M13 13 24.500 9A12 12 0 0 1 12 25z" fill="#f5c33b" />
            <path d="M13 13 12 25A12 12 0 0 1 2.500 7z" fill="#2f9e56" />
            <circle cx="13" cy="13" r="5.500" fill="#3f83e8" stroke="#fff" strokeWidth="2" />
            <circle cx="19" cy="19" r="6" fill="#2a211f" />
          </svg>
        </TaskIcon>
        <TaskIcon className="ml-[9px]" on>
          <svg width="24" height="26" viewBox="0 0 24 26">
            <rect x="1" y="1" width="22" height="24" rx="3" fill="#b30b00" />
            <path d="M5 20c3-2 6-8 6-13 0-2 2-2 2 0 0 5 3 8 7 9-5 0-10 1-13 5-1 1-3 0-2-1z" fill="none" stroke="#fff" strokeWidth="1.5" />
          </svg>
        </TaskIcon>
      </div>
      <div className="ml-auto flex items-center">
        <svg width="30" height="30" viewBox="0 0 30 30" className="flex-none">
          <circle cx="16" cy="14" r="10" fill="#f5a623" />
          <path d="M2 9a4 4 0 0 1 7-2 3 3 0 0 1 5 3H3z" fill="#cfe0f5" />
          <path d="M14 26a4 4 0 0 1 5-5 4 4 0 0 1 8 2 2 2 0 0 1 0 3z" fill="#8fb8ea" />
        </svg>
        <span className="ml-[4px] text-[13.5px] tracking-[-0.2px]">32°C</span>
        <span className="ml-[8px] text-[13.5px] tracking-[-0.2px]">Partly sunny</span>
        <ChevronUp size={18} strokeWidth={1.5} className="ml-[20px]" />
        <Wifi size={16} strokeWidth={1.5} className="ml-[9px]" />
        <svg width="16" height="10" viewBox="0 0 16 10" fill="none" stroke="#fff" className="ml-[8px]">
          <rect x=".5" y=".5" width="13" height="9" />
          <rect x="2" y="2" width="6" height="6" fill="#fff" stroke="none" />
          <path d="M15 3v4" />
        </svg>
        <Volume2 size={17} strokeWidth={1.4} className="ml-[6px]" />
        <div className="w-[72px] pt-px flex flex-col items-center text-[11.5px] leading-[19px] tracking-[-0.2px]">
          <span>1:54 PM</span>
          <span>10/15/2023</span>
        </div>
        <svg width="16" height="16" viewBox="0 0 16 16" fill="none" stroke="#fff" className="ml-[8px] mr-[25px]">
          <path d="M.5 1h15v11H10l-2 3-2-3H.5z" />
        </svg>
      </div>
    </div>
  );
}

export default function App() {
  return (
    <div className="w-[1366px] h-[768px] flex flex-col overflow-hidden bg-white font-['Noto_Sans',sans-serif]">
      {/* Title bar */}
      <div className="h-[23px] flex items-center flex-none font-['Roboto',sans-serif]">
        <svg width="16" height="16" viewBox="0 0 16 16" stroke="#4f7fb0" strokeWidth="1.1" className="ml-[3px]">
          <path d="M8 1v14M1 8h14M3.500 3v4M1.500 5h4M12.500 3v4M10.500 5h4M3.500 9v4M1.500 11h4M12.500 9v4M10.500 11h4" />
        </svg>
        <span className="ml-[4px] text-[11.8px] text-[#222]">Tableau - Dashboard 1 [Recovered] - Tableau license expires in 13 days</span>
        <div className="ml-auto flex items-center text-[#222]">
          <span className="w-[10px] h-px bg-[#222]" />
          <svg width="11" height="12" viewBox="0 0 11 12" fill="none" stroke="#222" className="ml-[35px]">
            <path d="M.5 3h7.500v8.500H.5zM3 3V.5h7.500v8.500H8" />
          </svg>
          <X size={15} strokeWidth={1.2} className="ml-[33px] mr-[17px]" />
        </div>
      </div>
      {/* Menu */}
      <div className="h-[20px] pl-[8px] flex items-center gap-[16px] flex-none text-[11.8px] text-[#222] font-['Roboto',sans-serif]">
        {menus.map((m) => (
          <span key={m}>{m}</span>
        ))}
      </div>
      <Toolbar />
      <div className="flex-1 flex min-h-0">
        <Sidebar />
        <main className="flex-1 flex flex-col min-w-0 bg-[#f5f5f5]">
          <div className="h-[38px] flex-none flex bg-white border-r border-[#cfcfcf] text-[13px] text-[#555]">
            <div className="w-[138px] flex items-center justify-center bg-[#f5f5f5]">Device Preview</div>
            <div className="ml-[18px] flex items-center">Device type</div>
            <div className="ml-[6px] mt-[8px] w-[121px] h-[23px] flex items-stretch border border-[#cfcfcf] rounded-[2px] text-[#444]">
              <span className="w-[13px] flex items-center justify-center border-r border-[#cfcfcf]">
                <svg width="4" height="7" viewBox="0 0 4 7" fill="#555"><path d="M4 0v7L0 3.500z" /></svg>
              </span>
              <span className="flex-1 pl-[6px] pb-px flex items-center">Default</span>
              <span className="w-[12px] flex items-center justify-center border-l border-[#cfcfcf]">
                <svg width="4" height="7" viewBox="0 0 4 7" fill="#555"><path d="M0 0v7l4-3.500z" /></svg>
              </span>
            </div>
          </div>
          <Dashboard />
        </main>
      </div>
      <TabBar />
      <StatusBar />
      <Taskbar />
    </div>
  );
}
